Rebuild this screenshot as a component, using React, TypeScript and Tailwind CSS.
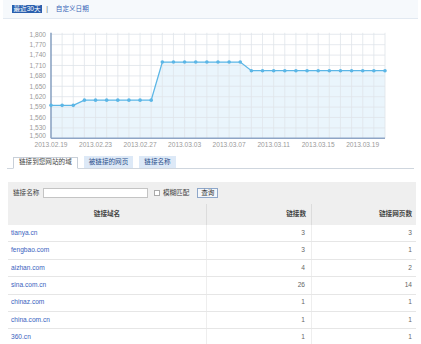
import React from "react";

const FONT = '"Liberation Sans", "Noto Sans CJK SC", sans-serif';

const values: number[] = [
  1595, 1595, 1595,
  1610, 1610, 1610, 1610, 1610, 1610, 1610,
  1720, 1720, 1720, 1720, 1720, 1720, 1720, 1720,
  1695, 1695, 1695, 1695, 1695, 1695, 1695, 1695, 1695, 1695, 1695, 1695, 1695,
];

const X0 = 51;
const STEP = 11.133;
const TOP = 19; // svg top on page
const py = (v: number) => 138.3 - (v - 1500) * 0.3467 - TOP;
const px = (i: number) => X0 + i * STEP;

const yTicks = [1800, 1770, 1740, 1710, 1680, 1650, 1620, 1590, 1560, 1530];
const xLabels = ["2013.02.19", "2013.02.23", "2013.02.27", "2013.03.03", "2013.03.07", "2013.03.11", "2013.03.15", "2013.03.19"];

function Chart() {
  const base = py(1500);
  const pts = values.map((v, i) => `${px(i)},${py(v)}`).join(" ");
  const area = `${px(0)},${base} ${pts} ${px(30)},${base}`;
  return (
    <svg width="421" height="133" style={{ fontFamily: FONT }} className="block">
      <polygon points={area} fill="#eaf5fc" />
      {/* horizontal grid */}
      {yTicks.map((t) => (
        <line key={t} x1={X0} x2={px(30)} y1={py(t)} y2={py(t)} stroke="#dfe4ea" strokeWidth="0.8" />
      ))}
      {/* vertical grid */}
      {values.map((_, i) => (
        <line key={i} x1={px(i)} x2={px(i)} y1={py(1800) - 1.5} y2={base} stroke="#dfe4ea" strokeWidth="0.8" />
      ))}
      <line x1={X0} x2={X0} y1={py(1800) - 1.5} y2={base} stroke="#6f8db5" strokeWidth="1.2" />
      <line x1={X0} x2={px(30)} y1={base} y2={base} stroke="#8ea5c6" strokeWidth="1.6" />
      {yTicks.map((t) => (
        <text key={t} x={46} y={py(t) + 2.3} fontSize="6.6" fill="#9a9a9a" textAnchor="end">
          {t.toLocaleString("en-US")}
        </text>
      ))}
      <text x={46} y={135.3 - TOP + 2.3} fontSize="6.6" fill="#9a9a9a" textAnchor="end">
        1,500
      </text>
      {xLabels.map((l, k) => (
        <text key={l} x={px(k * 4)} y={145 - TOP + 2.3} fontSize="6.6" fill="#9a9a9a" textAnchor="middle">
          {l}
        </text>
      ))}
      <polyline points={pts} fill="none" stroke="#5bb6e6" strokeWidth="1.3" />
      {values.map((v, i) => (
        <circle key={i} cx={px(i)} cy={py(v)} r="1.8" fill="#5bb6e6" />
      ))}
    </svg>
  );
}

const rows: [string, number, number][] = [
  ["tianya.cn", 3, 3],
  ["fengbao.com", 3, 1],
  ["aizhan.com", 4, 2],
  ["sina.com.cn", 26, 14],
  ["chinaz.com", 1, 1],
  ["china.com.cn", 1, 1],
  ["360.cn", 1, 1],
];

export default function App() {
  return (
    <div className="w-[421px] h-[344px] overflow-hidden bg-white text-[6.6px] leading-none" style={{ fontFamily: FONT }}>
      {/* top range bar */}
      <div className="h-[19px] mx-[3px] bg-[#f6f9fc] border-b border-[#e2e9f1] flex items-center pl-[9px] gap-[3px]">
        <span className="bg-[#2a5fae] text-white px-[1.5px] h-[7.5px] flex items-center">最近30天</span>
        <span className="text-[#666] px-[1px]">|</span>
        <span className="text-[#3a66b8] ml-[4px]">自定义日期</span>
      </div>

      <Chart />

      {/* tabs */}
      <div className="mt-[5px] mx-[7px] h-[12px] flex items-end gap-[6px] pl-[6px] border-b border-[#cfd6de]">
        <div className="h-[12.5px] -mb-px px-[5px] flex items-center bg-white border border-[#c8cfd8] border-b-white text-[#444]">
          链接到您网站的域
        </div>
        <div className="h-[12px] px-[5px] flex items-center bg-[#dde9f7] text-[#2b4f8c]">被链接的网页</div>
        <div className="h-[12px] px-[5px] flex items-center bg-[#dde9f7] text-[#2b4f8c]">链接名称</div>
      </div>

      {/* search + table */}
      <div className="mt-[13px] ml-[8px] w-[408px]">
        <div className="h-[22px] bg-[#efefef] flex items-center pl-[5px] text-[#444]">
          <span>链接名称</span>
          <div className="ml-[4px] w-[105px] h-[10px] bg-white border border-[#c4c4c4]" />
          <div className="ml-[6px] w-[5.5px] h-[5.5px] bg-white border border-[#aaa]" />
          <span className="ml-[3px]">模糊匹配</span>
          <div className="ml-[8px] h-[10px] px-[3px] flex items-center bg-[#f4f7fb] border border-[#8fa7c9] text-[#333]">查询</div>
        </div>
        <div className="grid grid-cols-[199px_105px_104px] h-[21px] bg-[#efefef] font-bold text-[#444]">
          <div className="flex items-center justify-center border-r border-[#dcdcdc]">链接域名</div>
          <div className="flex items-center justify-end pr-[5px] border-r border-[#dcdcdc]">链接数</div>
          <div className="flex items-center justify-end pr-[4px]">链接网页数</div>
        </div>
        {rows.map(([d, a, b]) => (
          <div key={d} className="grid grid-cols-[199px_105px_104px] h-[17.4px] border-b border-[#e6e6e6]">
            <div className="flex items-center pl-[3px] text-[#3a63c0] border-r border-[#eeeeee]">{d}</div>
            <div className="flex items-center justify-end pr-[6px] text-[#666] border-r border-[#eeeeee]">{a}</div>
            <div className="flex items-center justify-end pr-[4px] text-[#666]">{b}</div>
          </div>
        ))}
      </div>
    </div>
  );
}
